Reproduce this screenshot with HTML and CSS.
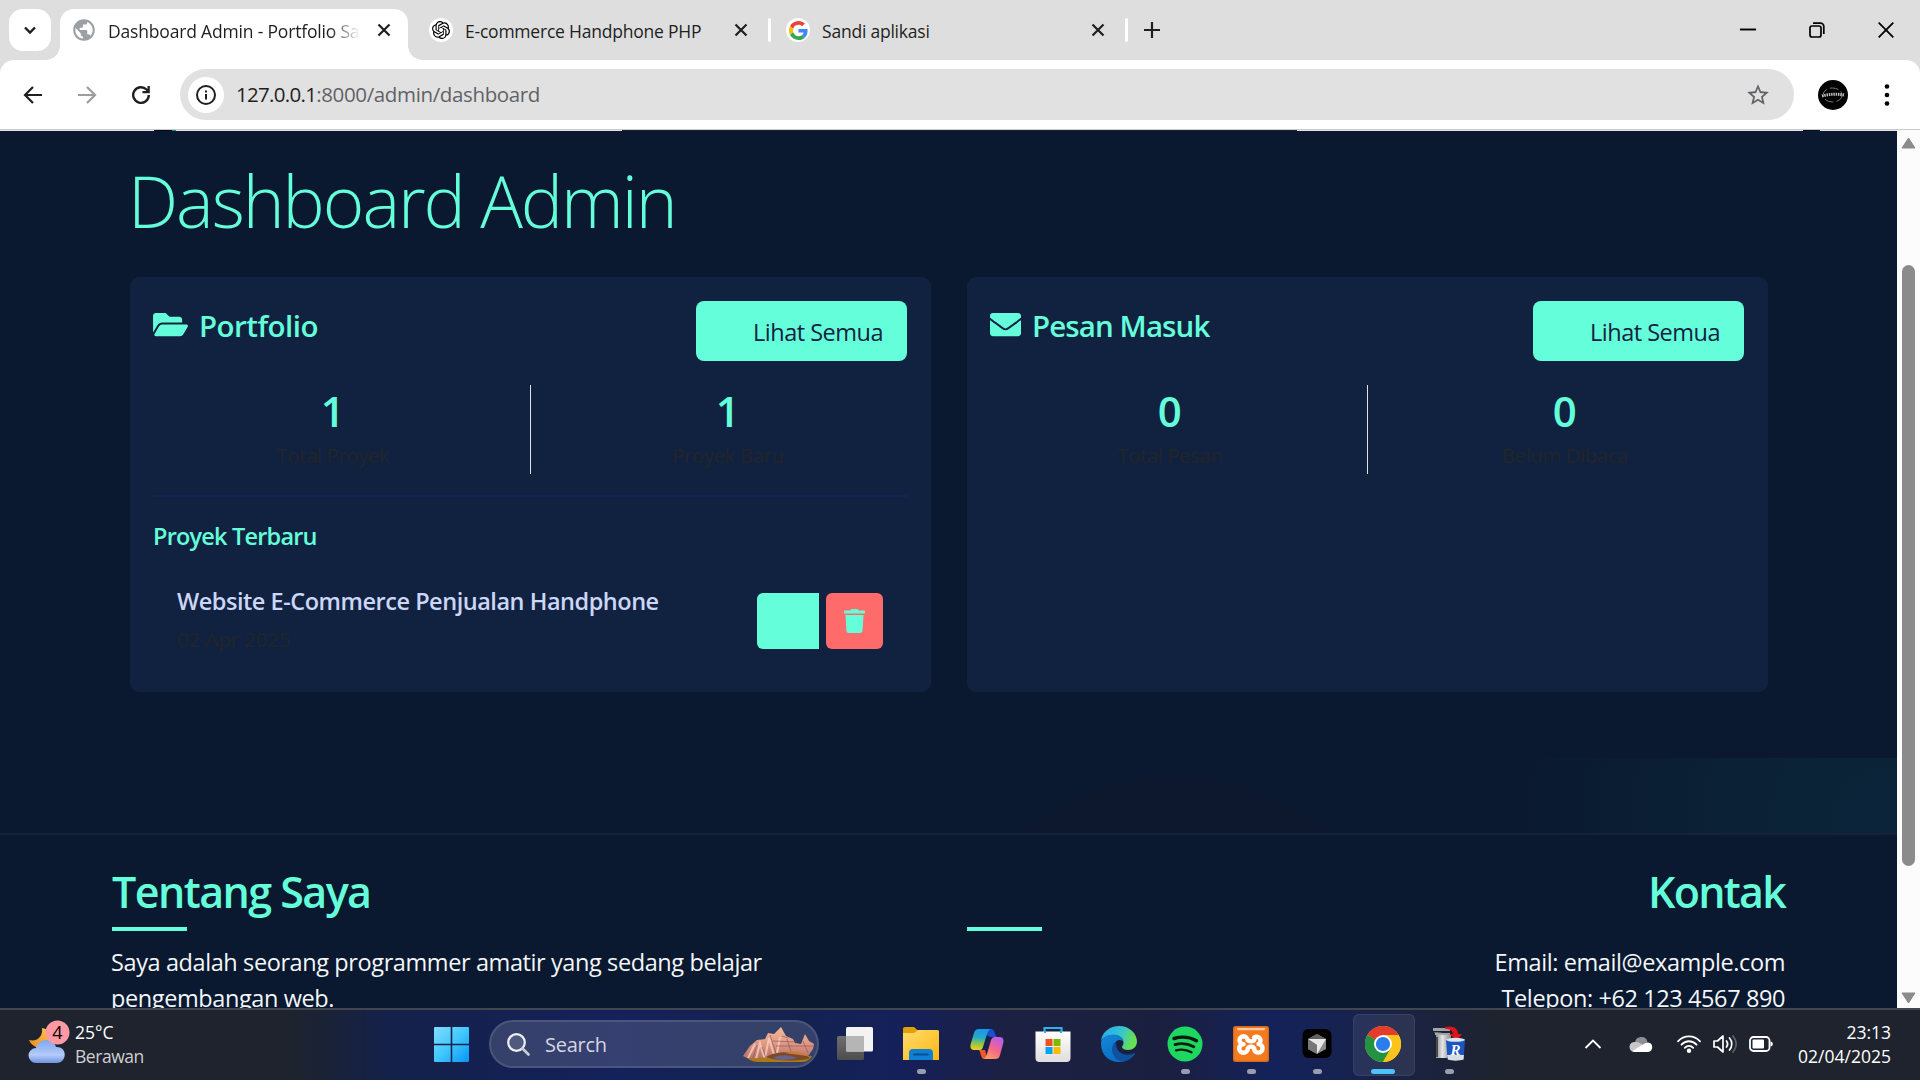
FILE: index.html
```html
<!DOCTYPE html>
<html lang="id">
<head>
<meta charset="utf-8">
<title>Dashboard Admin - Portfolio Saya</title>
<link rel="stylesheet" href="styles.css">
</head>
<body>
<div class="screen">
  <header class="tabstrip">
    <button class="tab-search"><svg width="14" height="14" viewBox="0 0 14 14"><path d="M2 4.5l5 5 5-5" fill="none" stroke="#1f1f1f" stroke-width="2.4"/></svg></button>
    <div class="tab tab-active">
      <svg class="globe" width="26" height="26" viewBox="0 0 24 24"><circle cx="12" cy="12" r="9" fill="#fff"/><path fill="#9aa0a6" d="M12 2C6.48 2 2 6.48 2 12s4.48 10 10 10 10-4.48 10-10S17.52 2 12 2zm-1 17.93c-3.95-.49-7-3.85-7-7.93 0-.62.08-1.21.21-1.79L9 15v1c0 1.1.9 2 2 2v1.93zm6.9-2.54c-.26-.81-1-1.39-1.9-1.39h-1v-3c0-.55-.45-1-1-1H8v-2h2c.55 0 1-.45 1-1V7h2c1.1 0 2-.9 2-2v-.41c2.93 1.19 5 4.06 5 7.41 0 2.08-.8 3.97-2.1 5.39z"/></svg>
      <span class="tab-title fade">Dashboard Admin - Portfolio Sa</span>
      <svg class="x" width="14" height="14" viewBox="0 0 14 14"><path d="M1.5 1.5l11 11M12.5 1.5l-11 11"/></svg>
    </div>
    <div class="tab tab-two">
      <span class="fav"><svg width="18" height="18" viewBox="0 0 24 24"><path d="M22.2819 9.8211a5.9847 5.9847 0 0 0-.5157-4.9108 6.0462 6.0462 0 0 0-6.5098-2.9A6.0651 6.0651 0 0 0 4.9807 4.1818a5.9847 5.9847 0 0 0-3.9977 2.9 6.0462 6.0462 0 0 0 .7427 7.0966 5.98 5.98 0 0 0 .511 4.9107 6.051 6.051 0 0 0 6.5146 2.9001A5.9847 5.9847 0 0 0 13.2599 24a6.0557 6.0557 0 0 0 5.7718-4.2058 5.9894 5.9894 0 0 0 3.9977-2.9001 6.0557 6.0557 0 0 0-.7475-7.0729zm-9.022 12.6081a4.4755 4.4755 0 0 1-2.8764-1.0408l.1419-.0804 4.7783-2.7582a.7948.7948 0 0 0 .3927-.6813v-6.7369l2.02 1.1686a.071.071 0 0 1 .038.052v5.5826a4.504 4.504 0 0 1-4.4945 4.4944zm-9.6607-4.1254a4.4708 4.4708 0 0 1-.5346-3.0137l.142.0852 4.783 2.7582a.7712.7712 0 0 0 .7806 0l5.8428-3.3685v2.3324a.0804.0804 0 0 1-.0332.0615L9.74 19.9502a4.4992 4.4992 0 0 1-6.1408-1.6464zM2.3408 7.8956a4.485 4.485 0 0 1 2.3655-1.9728V11.6a.7664.7664 0 0 0 .3879.6765l5.8144 3.3543-2.0201 1.1685a.0757.0757 0 0 1-.071 0l-4.8303-2.7865A4.504 4.504 0 0 1 2.3408 7.872zm16.5963 3.8558L13.1038 8.364 15.1192 7.2a.0757.0757 0 0 1 .071 0l4.8303 2.7913a4.4944 4.4944 0 0 1-.6765 8.1042v-5.6772a.79.79 0 0 0-.407-.667zm2.0107-3.0231l-.142-.0852-4.7735-2.7818a.7759.7759 0 0 0-.7854 0L9.409 9.2297V6.8974a.0662.0662 0 0 1 .0284-.0615l4.8303-2.7866a4.4992 4.4992 0 0 1 6.6802 4.66zM8.3065 12.863l-2.02-1.1638a.0804.0804 0 0 1-.038-.0567V6.0742a4.4992 4.4992 0 0 1 7.3757-3.4537l-.142.0805L8.704 5.459a.7948.7948 0 0 0-.3927.6813zm1.0976-2.3654l2.602-1.4998 2.6069 1.4998v2.9994l-2.5974 1.4997-2.6067-1.4997Z"/></svg></span>
      <span class="tab-title">E-commerce Handphone PHP</span>
      <svg class="x" width="14" height="14" viewBox="0 0 14 14"><path d="M1.5 1.5l11 11M12.5 1.5l-11 11"/></svg>
    </div>
    <i class="sep"></i>
    <div class="tab tab-three">
      <span class="fav"><svg width="19" height="19" viewBox="0 0 48 48"><path fill="#EA4335" d="M24 9.5c3.54 0 6.71 1.22 9.21 3.6l6.85-6.85C35.9 2.38 30.47 0 24 0 14.62 0 6.51 5.38 2.56 13.22l7.98 6.19C12.43 13.72 17.74 9.5 24 9.5z"/><path fill="#4285F4" d="M46.98 24.55c0-1.57-.15-3.09-.38-4.55H24v9.02h12.94c-.58 2.96-2.26 5.48-4.78 7.18l7.73 6c4.51-4.18 7.09-10.36 7.09-17.65z"/><path fill="#FBBC05" d="M10.53 28.59c-.48-1.45-.76-2.99-.76-4.59s.27-3.14.76-4.59l-7.98-6.19C.92 16.46 0 20.12 0 24c0 3.88.92 7.54 2.56 10.78l7.97-6.19z"/><path fill="#34A853" d="M24 48c6.48 0 11.93-2.13 15.89-5.81l-7.73-6c-2.15 1.45-4.92 2.3-8.16 2.3-6.26 0-11.57-4.22-13.47-9.91l-7.98 6.19C6.51 42.62 14.62 48 24 48z"/></svg></span>
      <span class="tab-title">Sandi aplikasi</span>
      <svg class="x" width="14" height="14" viewBox="0 0 14 14"><path d="M1.5 1.5l11 11M12.5 1.5l-11 11"/></svg>
    </div>
    <i class="sep"></i>
    <svg class="plus" width="16" height="16" viewBox="0 0 16 16"><path d="M8 0v16M0 8h16" stroke="#1f1f1f" stroke-width="2.2"/></svg>
    <div class="win-controls">
      <svg width="16" height="16" viewBox="0 0 16 16"><path d="M0 7.500h16" stroke="#000" stroke-width="1.9"/></svg>
      <svg width="16" height="16" viewBox="0 0 16 16" fill="none" stroke="#000" stroke-width="1.7"><rect x="1" y="4" width="11" height="11" rx="2"/><path d="M4 1.2h7.5a3.3 3.3 0 0 1 3.3 3.3V12"/></svg>
      <svg width="16" height="16" viewBox="0 0 16 16"><path d="M.7.7l14.6 14.6M15.3.7L.7 15.3" stroke="#000" stroke-width="1.8"/></svg>
    </div>
  </header>

  <div class="toolbar-wrap"><div class="toolbar">
    <div class="nav">
      <svg width="20" height="20" viewBox="0 0 20 20" fill="none" stroke="#1f1f1f" stroke-width="2.2"><path d="M19 10H2.5M10 2L2 10l8 8"/></svg>
      <svg width="20" height="20" viewBox="0 0 20 20" fill="none" stroke="#9d9d9d" stroke-width="2.2"><path d="M1 10h16.500M10 2l8 8-8 8"/></svg>
      <svg width="20" height="20" viewBox="0 0 20 20"><path d="M17.800 10a7.800 7.800 0 1 1-2.300-5.500L17.500 6.500" fill="none" stroke="#1f1f1f" stroke-width="2.400"/><path d="M18.800 1v7.300h-7.300V6h5V1z" fill="#1f1f1f"/></svg>
    </div>
    <div class="omnibox">
      <span class="info"><svg width="22" height="22" viewBox="0 0 22 22"><circle cx="11" cy="11" r="9" fill="none" stroke="#1f1f1f" stroke-width="2"/><path d="M10 10h2v5.500h-2zM10 6.500h2v2h-2z" fill="#1f1f1f"/></svg></span>
      <span class="url"><b>127.0.0.1</b>:8000/admin/dashboard</span>
      <svg class="star" width="26" height="26" viewBox="0 0 24 24"><path fill="#5f6368" d="M22 9.240l-7.190-.620L12 2 9.190 8.630 2 9.240l5.460 4.730L5.820 21 12 17.270 18.180 21l-1.630-7.030L22 9.240zM12 15.400l-3.760 2.270 1-4.280-3.320-2.880 4.380-.380L12 6.100l1.710 4.040 4.380.380-3.320 2.880 1 4.280L12 15.400z"/></svg>
    </div>
    <svg class="avatar" width="30" height="30" viewBox="0 0 30 30"><circle cx="15" cy="15" r="15"/><ellipse cx="14.500" cy="15" rx="9.500" ry="7" fill="none" stroke="#777" stroke-width="1" stroke-dasharray="9 3"/><path d="M4 16q11-3 22-1" fill="none" stroke="#bbb" stroke-width="3" stroke-dasharray="1.500 .8"/></svg>
    <svg class="dots" width="6" height="24" viewBox="0 0 6 24"><circle cx="3" cy="3.500" r="2.300"/><circle cx="3" cy="12" r="2.300"/><circle cx="3" cy="20.500" r="2.300"/></svg>
  </div></div>

  <div class="viewport">
    <main class="page">
      <div class="navbar-edge"></div>
      <div class="container">
        <h1>Dashboard Admin</h1>
        <div class="cards">
          <section class="card">
            <div class="card-head">
              <h2><svg width="35" height="31" viewBox="0 0 576 512"><path d="M572.694 292.093L500.270 416.248A63.997 63.997 0 0 1 444.989 448H45.025c-18.523 0-30.064-20.093-20.731-36.093l72.424-124.155A64 64 0 0 1 152 256h399.964c18.523 0 30.064 20.093 20.730 36.093zM152 224h328v-48c0-26.510-21.490-48-48-48H272l-64-64H48C21.490 64 0 85.490 0 112v278.046l69.077-118.418C86.214 242.250 117.989 224 152 224z"/></svg><span>Portfolio</span></h2>
              <a class="btn">Lihat Semua</a>
            </div>
            <div class="stats">
              <div><strong>1</strong><small>Total Proyek</small></div>
              <div><strong>1</strong><small>Proyek Baru</small></div>
            </div>
            <hr>
            <h3>Proyek Terbaru</h3>
            <div class="project">
              <div class="project-info">
                <h4>Website E-Commerce Penjualan Handphone</h4>
                <small>02 Apr 2025</small>
              </div>
              <div class="actions">
                <a class="edit"></a>
                <a class="delete"><svg width="21" height="24" viewBox="0 0 448 512"><path d="M432 32H312l-9.400-18.700A24 24 0 0 0 281.100 0H166.800a23.720 23.720 0 0 0-21.400 13.300L136 32H16A16 16 0 0 0 0 48v32a16 16 0 0 0 16 16h416a16 16 0 0 0 16-16V48a16 16 0 0 0-16-16zM53.200 467a48 48 0 0 0 47.900 45h245.800a48 48 0 0 0 47.900-45L416 128H32z"/></svg></a>
              </div>
            </div>
          </section>
          <section class="card">
            <div class="card-head">
              <h2 class="inbox"><svg width="31" height="31" viewBox="0 0 512 512"><path d="M502.300 190.800c3.900-3.100 9.700-.2 9.700 4.700V400c0 26.500-21.500 48-48 48H48c-26.500 0-48-21.500-48-48V195.600c0-5 5.700-7.800 9.700-4.700 22.400 17.400 52.100 39.500 154.100 113.600 21.100 15.400 56.700 47.800 92.200 47.600 35.700.3 72-32.800 92.300-47.600 102-74.100 131.600-96.300 154-113.700zM256 320c23.200.4 56.600-29.200 73.400-41.400 132.700-96.300 142.800-104.700 173.400-128.700 5.800-4.500 9.200-11.500 9.200-18.900v-19c0-26.500-21.500-48-48-48H48c-26.500 0-48 21.500-48 48v19c0 7.400 3.400 14.300 9.200 18.900 30.600 23.900 40.700 32.400 173.400 128.700 16.800 12.200 50.200 41.800 73.400 41.400z"/></svg><span>Pesan Masuk</span></h2>
              <a class="btn">Lihat Semua</a>
            </div>
            <div class="stats">
              <div><strong>0</strong><small>Total Pesan</small></div>
              <div><strong>0</strong><small>Belum Dibaca</small></div>
            </div>
          </section>
        </div>
      </div>
      <div class="glow"></div>
      <footer>
        <div class="foot-col">
          <h5>Tentang Saya</h5>
          <p>Saya adalah seorang programmer amatir yang sedang belajar<br>pengembangan web.</p>
        </div>
        <div class="foot-col foot-right">
          <h5>Kontak</h5>
          <p>Email: email@example.com<br>Telepon: +62 123 4567 890</p>
        </div>
      </footer>
    </main>
    <div class="scrollbar">
      <svg width="15" height="12" viewBox="0 0 15 12"><path d="M7.500 1L14 11H1z" fill="#8b8b8b" stroke="#8b8b8b" stroke-linejoin="round"/></svg>
      <div class="thumb"></div>
      <svg width="15" height="12" viewBox="0 0 15 12"><path d="M7.500 11L14 1H1z" fill="#8b8b8b" stroke="#8b8b8b" stroke-linejoin="round"/></svg>
    </div>
  </div>

  <div class="taskbar">
    <div class="weather">
      <svg width="44" height="44" viewBox="0 0 44 44">
        <defs><linearGradient id="moon" x1="0" y1="1" x2="1" y2="0"><stop offset="0" stop-color="#f08a1c"/><stop offset="1" stop-color="#fbc84a"/></linearGradient><linearGradient id="cloud" x1="0" y1="0" x2="0" y2="1"><stop offset="0" stop-color="#7fa6ee"/><stop offset=".65" stop-color="#b3ccfa"/><stop offset="1" stop-color="#6f92de"/></linearGradient></defs>
        <path d="M15 8c8 1 13 10 8 17-5 6-17 4-21-5 9 2 14-4 13-12z" fill="url(#moon)"/>
        <path d="M9 43a7.500 7.500 0 1 1 0-15c2-10 17-11 20-1 12-1 11 16 1 16z" fill="url(#cloud)"/>
        <circle cx="30.500" cy="12.500" r="12" fill="#ff99a4"/><text x="30.500" y="19" text-anchor="middle">4</text>
      </svg>
      <div class="weather-text"><span>25°C</span><span class="dim">Berawan</span></div>
    </div>
    <div class="dock">
      <div class="app start"><svg width="35" height="35" viewBox="0 0 35 35"><defs><linearGradient id="win" x1="0" y1="0" x2="1" y2="1"><stop offset="0" stop-color="#84dcfb"/><stop offset=".5" stop-color="#40c8fd"/><stop offset="1" stop-color="#0795f5"/></linearGradient></defs><path fill="url(#win)" d="M1 0h15.700v16.700H0V1a1 1 0 0 1 1-1zM18.300 0H34a1 1 0 0 1 1 1v15.700H18.300zM0 18.300h16.700V35H1a1 1 0 0 1-1-1zM18.300 18.300H35V34a1 1 0 0 1-1 1H18.300z"/></svg></div>
      <div class="search">
        <svg width="23" height="23" viewBox="0 0 23 23"><circle cx="9.500" cy="9.500" r="8.300" fill="#ffffff22" stroke="#eef0f5" stroke-width="2.200"/><path d="M15.500 15.500l6 6" stroke="#c9cdd8" stroke-width="2.600" stroke-linecap="round"/></svg>
        <span>Search</span>
        <svg class="mesa" width="72" height="35" viewBox="0 0 72 35">
          <defs><linearGradient id="rock" x1="0" y1="0" x2="0" y2="1"><stop offset="0" stop-color="#f7b999"/><stop offset=".5" stop-color="#e09a84"/><stop offset="1" stop-color="#b87068"/></linearGradient></defs>
          <path fill="url(#rock)" d="M0 29l7-10 7-6 8-1 3-6 6 1 7-7 5 9 7 3 2 4 6 1 4-10 4 7 5 3-1 5-7 10H6z"/>
          <path d="M5 31l7-14M13 32l4-16 4 14M22 31l4-20 5 17M34 26l3-16" stroke="#f5d0bd" stroke-width="2" fill="none" opacity=".8"/>
          <path d="M10 31l4-13M19 20l4 11M27 8l6 18M44 12l4 13M60 14l5 12M30 14l24 1M33 19l37 0M39 9l6 2" stroke="#8a4d5a" stroke-width="1" fill="none" opacity=".6"/>
          <path d="M4 31c22 1 42-4 65-2-2 4-6 6-11 6H17c-6 0-9-1-13-4z" fill="#a97818"/>
          <path d="M23 30c10-7 35-6 44 1-5 3-34 4-44-1z" fill="#7b4a28"/><path d="M30 31c8-4 16-3 24 0-6 2-18 3-24 0z" fill="#68618a"/><path d="M42 26c9-3 17-1 22 3z" fill="#c97b3d"/>
        </svg>
      </div>
      <div class="app"><svg width="36" height="36" viewBox="0 0 36 36"><defs><linearGradient id="tv" x1="0" y1="0" x2="0" y2="1"><stop offset="0" stop-color="#6f6f70"/><stop offset="1" stop-color="#4d4d4e"/></linearGradient></defs><rect y="10" width="27" height="24" rx="1.500" fill="url(#tv)"/><rect x="9" y="1" width="27" height="24.500" rx="1.500" fill="#f3f3f4"/><path d="M9 10h18v15.500H10.500A1.500 1.500 0 0 1 9 24z" fill="#b5b5b6"/></svg></div>
      <div class="app open"><svg width="36" height="36" viewBox="0 0 36 36"><defs><linearGradient id="fold" x1="0" y1="0" x2="1" y2="1"><stop offset="0" stop-color="#ffdc6b"/><stop offset="1" stop-color="#fcb714"/></linearGradient></defs><path d="M0 3a2 2 0 0 1 2-2h9l4 3.500V10H0z" fill="#dfa00b"/><path d="M0 7h11l4-3h19.500A1.500 1.500 0 0 1 36 5.500V34H0z" fill="url(#fold)"/><path d="M6 34v-7a4 4 0 0 1 4-4h16a4 4 0 0 1 4 4v7z" fill="#0f7fd2"/><path d="M11 28.500h14" stroke="#0a4f96" stroke-width="1.800" stroke-linecap="round"/></svg></div>
      <div class="app"><svg width="36" height="36" viewBox="0 0 36 36"><defs><linearGradient id="cp1" x1=".4" y1="0" x2=".3" y2="1"><stop offset="0" stop-color="#1997ee"/><stop offset=".4" stop-color="#25aac5"/><stop offset=".7" stop-color="#8cc84b"/><stop offset="1" stop-color="#f2cd1c"/></linearGradient><linearGradient id="cp2" x1=".8" y1="0" x2=".2" y2="1"><stop offset="0" stop-color="#b45cf1"/><stop offset=".5" stop-color="#f2668d"/><stop offset="1" stop-color="#ffa25c"/></linearGradient></defs><path d="M17 3h5c4 0 3.500 6 6 8h-6c-2 0-3-2-5-2z" fill="#1b4fd0"/><path d="M10 24h6l2 7-3 2c-3 0-3-6-5-9z" fill="#f0582c"/><path d="M10 3h13c-3 0-4 2-5 5l-4 13c-1 3-2 3-4 3H5c-4 0-4-4-3-7L5 7c1-3 2-4 5-4z" fill="url(#cp1)"/><path d="M26 33H13c3 0 4-2 5-5l4-14c1-2 2-3 4-3h5c4 0 4 4 3 7l-3 11c-1 3-2 4-5 4z" fill="url(#cp2)"/></svg></div>
      <div class="app"><svg width="36" height="36" viewBox="0 0 36 36"><defs><linearGradient id="bag" x1="0" y1="0" x2="0" y2="1"><stop offset="0" stop-color="#fff"/><stop offset="1" stop-color="#dedede"/></linearGradient></defs><path d="M9.500 8V2h17v6" fill="none" stroke="#29b3ea" stroke-width="2.200"/><path d="M.5 5.500h35V32a4 4 0 0 1-4 4h-27a4 4 0 0 1-4-4z" fill="url(#bag)"/><path d="M9 5h2v2H9zM25 5h2v2h-2z" fill="#29b3ea"/><path d="M10.500 13h7v7h-7z" fill="#f25022"/><path d="M18.500 13h7v7h-7z" fill="#7fba00"/><path d="M10.500 21h7v7h-7z" fill="#00a4ef"/><path d="M18.500 21h7v7h-7z" fill="#ffb900"/></svg></div>
      <div class="app"><svg width="36" height="36" viewBox="0 0 36 36"><defs><linearGradient id="e1" x1="0" y1="0" x2="1" y2=".3"><stop offset="0" stop-color="#2aa6e8"/><stop offset=".55" stop-color="#32c3d6"/><stop offset="1" stop-color="#67e052"/></linearGradient><linearGradient id="e2" x1="0" y1="0" x2=".5" y2="1"><stop offset="0" stop-color="#1488d8"/><stop offset="1" stop-color="#0a6fc4"/></linearGradient></defs><path d="M0 15C1 6 9 0 18 0c11 0 18 8 18 15.500 0 5-4 8.500-9 8.500-4 0-6-1.500-6-3 0-1 1.500-1.500 1.500-4.500C22.500 12 18 9 13 9 6 9 1 12 0 15z" fill="url(#e1)"/><path d="M0 17c0-5 6-8.500 13-8.500 5 0 9.500 3 9.500 8 0-2.500-7-5-9 2C11 27 17 36 24 34.900 15 38.500 0 34 0 17z" fill="url(#e2)"/><path d="M13.800 16.500C8 22 12 33 20.500 35.500c6 .2 11-3.500 13.500-7.500.4-.8-.4-1.200-1-.8-8 4-18.500-.7-17.800-9.200z" fill="#11509e"/></svg></div>
      <div class="app open"><svg width="36" height="36" viewBox="0 0 36 36"><circle cx="18" cy="18" r="17.500" fill="#1ed760"/><g fill="none" stroke="#101812" stroke-linecap="round"><path d="M7 12.500c7.500-2.200 16-1.500 22.500 2.200" stroke-width="3.400"/><path d="M8 18.600c6.500-1.800 13-1 18.800 2.200" stroke-width="2.800"/><path d="M9 24.300c5.500-1.300 10.500-.8 15.500 2" stroke-width="2.300"/></g></svg></div>
      <div class="app open"><svg width="36" height="36" viewBox="0 0 36 36"><rect width="36" height="36" rx="2.500" fill="#d66a1c"/><rect x="1.200" y="1.200" width="33.600" height="33.600" rx="2" fill="#f47a20"/><path d="M4 2h28v1.200a2 2 0 0 1-2 1H6a2 2 0 0 1-2-1z" fill="#ffc79c"/><g fill="none" stroke="#fff" stroke-width="4.400" stroke-linecap="round"><path d="M14.500 14a4 4 0 1 0-4 4.200M10.500 18.200a4.300 4.300 0 1 0 4.300 4.600M21 11.500a4 4 0 1 1 5 6.300M25.500 18a4.300 4.300 0 1 1-4.500 5M14.500 13.500c1 2.500 6 2.500 7 0M14.500 24c0-4.500 7-4.500 7 0"/></g></svg></div>
      <div class="app open"><svg width="36" height="36" viewBox="0 0 36 36"><rect x="3.500" y="3" width="29" height="29" rx="6" fill="#000"/><path d="M18 8l9 5v10l-9 5-9-5V13z" fill="#8b8b8b"/><path d="M9 13l9-5 9 5z" fill="#606060"/><path d="M9 13h18l-9 15v-9z" fill="#e9e9e9"/><path d="M9 13v10l9 5v-9z" fill="#777"/></svg></div>
      <div class="app current"><svg width="36" height="36" viewBox="0 0 36 36"><circle cx="18" cy="18" r="18" fill="#fbc116"/><path d="M18 18L2.400 9A18 18 0 0 1 33.600 9z" fill="#e33b2e"/><path d="M2.400 9A18 18 0 0 0 18 36l7.800-13.500L18 18z" fill="#229342"/><path d="M18 9h15.600A18 18 0 0 1 18 36l7.800-13.500z" fill="#fcc41a"/><circle cx="18" cy="18" r="9" fill="#fff"/><circle cx="18" cy="18" r="7.100" fill="#2b7ded"/></svg></div>
      <div class="app open"><svg width="36" height="36" viewBox="0 0 36 36"><defs><linearGradient id="rv" x1="0" y1="0" x2="1" y2="0"><stop offset="0" stop-color="#777"/><stop offset=".5" stop-color="#e4e4e4"/><stop offset="1" stop-color="#888"/></linearGradient></defs><path d="M3 6l17 2v24H5V9z" fill="url(#rv)"/><path d="M2 2h17v3H2zM4 7h15v2H4z" fill="#a4a4a4"/><path d="M6 11v20" stroke="#4a4a4a" stroke-width="2"/><path d="M14 1c9-2 13 2 13 7h4l-5 6-8-6h4c0-3-3-5-8-5z" fill="#e0131b"/><path d="M15 14h19l-1.500 20h-16z" fill="#1b55bd"/><path d="M16 29h17l-.5 4.500c-4 1.500-12 1.500-15.500 0z" fill="#d9dde4"/><ellipse cx="24.500" cy="13.800" rx="9.500" ry="2" fill="#dfe3ea"/><text class="revo" x="24.500" y="29" text-anchor="middle">R</text></svg></div>
    </div>
    <div class="tray">
      <svg width="18" height="18" viewBox="0 0 18 18"><path d="M1.500 13L9 5.500l7.500 7.500" fill="none" stroke="#fff" stroke-width="1.800"/></svg>
      <svg class="od" width="24" height="18" viewBox="0 0 24 18"><path d="M6 7a6.500 6.500 0 0 1 12.500-.5l-6 4z" fill="#8f9093"/><path d="M5 17a5 5 0 0 1 1-10c3-.5 5 1 9 4L7 17z" fill="#c6c7c9"/><path d="M3.500 16l11-7c1.500-1.200 3-1.800 4.700-1.500A4.800 4.800 0 0 1 19 17H5z" fill="#fff"/></svg>
      <svg class="wifi" width="24" height="18" viewBox="0 0 24 18" fill="none" stroke="#fff" stroke-width="1.800" stroke-linecap="round"><path d="M1 6.300C7-.3 17-.3 23 6.300M4.500 9.700c4.300-4.600 10.700-4.600 15 0M7.800 12.800c2.400-2.600 6-2.600 8.400 0"/><circle cx="12" cy="15.700" r="1.300" fill="#fff"/></svg>
      <svg class="vol" width="24" height="20" viewBox="0 0 24 20" fill="none" stroke="#fff" stroke-width="1.700" stroke-linecap="round" stroke-linejoin="round"><path d="M1 7h3.500L10 2v16l-5.500-5H1z"/><path d="M13.500 7a5 5 0 0 1 0 6M16.500 4a9 9 0 0 1 0 12"/><path d="M20 2c4 5 4 11 0 16" stroke="#5b5f67"/></svg>
      <svg class="bat" width="24" height="18" viewBox="0 0 24 18"><rect x="1" y="2" width="19.500" height="14" rx="3.500" fill="none" stroke="#fff" stroke-width="1.800"/><rect x="3.500" y="4.500" width="11.500" height="9" rx="1" fill="#fff"/><path d="M21.500 6.500c3 0 3 5 0 5z" fill="#fff"/></svg>
      <div class="clock"><span>23:13</span><span>02/04/2025</span></div>
    </div>
  </div>
</div>
</body>
</html>
```
FILE: styles.css
```css
* { box-sizing: border-box; }
body, h1, h2, h3, h4, h5, p { margin: 0; }
body {
  width: 1920px; height: 1080px; overflow: hidden;
  font-family: "Open Sans", "Noto Sans", sans-serif;
  background: #0a192f;
}
svg { display: block; flex: none; }
.screen { display: flex; flex-direction: column; height: 1080px; }

/* tab strip */
.tabstrip { height: 60px; background: #dedede; display: flex; align-items: center; padding-left: 9px; position: relative; }
.tab-search { width: 42px; height: 42px; border: 0; border-radius: 14px; background: #fff; display: grid; place-items: center; padding: 0; }
.tab { display: flex; align-items: center; height: 51px; font-size: 17.500px; letter-spacing: -.22px; color: #1f1f1f; }
.tab-active { width: 348px; margin-left: 9px; background: #fff; border-radius: 14px 14px 0 0; align-self: flex-end; padding: 0 17px 9px 11px; position: relative; letter-spacing: -.18px; }
.tab-active::before, .tab-active::after { content: ""; position: absolute; bottom: 0; width: 14px; height: 14px; }
.tab-active::before { left: -14px; background: radial-gradient(circle at 0 0, transparent 13.500px, #fff 14px); }
.tab-active::after { right: -14px; background: radial-gradient(circle at 100% 0, transparent 13.500px, #fff 14px); }
.tab-title { flex: 1; white-space: nowrap; overflow: hidden; line-height: 26px; padding-top: 2px; }
.tab-active .tab-title { margin-left: 11px; margin-right: 17px; }
.fade { -webkit-mask-image: linear-gradient(90deg, #000 88%, transparent 100%); mask-image: linear-gradient(90deg, #000 88%, transparent 100%); }
.x { stroke: #1f1f1f; stroke-width: 2.200; }
.fav { width: 24px; height: 24px; border-radius: 50%; background: #fff; display: grid; place-items: center; margin-right: 12px; }
.tab-two { width: 360px; padding: 0 20px 0 21px; }
.tab-three { width: 354px; padding: 0 20px 0 15px; }
.sep { width: 3px; height: 24px; border-radius: 2px; background: #fff; }
.plus { margin-left: 16px; }
.win-controls { margin-left: auto; display: flex; gap: 53px; padding-right: 26px; }

/* toolbar */
.toolbar-wrap { background: #dedede; }
.toolbar { height: 69px; background: #fff; border-radius: 14px 14px 0 0; display: flex; align-items: center; }
.nav { width: 180px; display: flex; gap: 34px; padding-left: 23px; }
.omnibox { width: 1614px; height: 51px; border-radius: 26px; background: #e1e1e1; display: flex; align-items: center; padding: 0 23px 0 8px; }
.info { width: 36px; height: 36px; border-radius: 50%; background: #fff; display: grid; place-items: center; }
.url { flex: 1; margin-left: 12px; padding-bottom: 2px; font-size: 20.500px; letter-spacing: -.36px; color: #5f6368; }
.url b { font-weight: 400; letter-spacing: -.7px; color: #1f1f1f; }
.avatar { margin-left: 24px; }
.dots { margin-left: 36px; }

/* page */
.viewport { flex: 1; min-height: 0; display: flex; border-top: 1px solid #c9c9c9; }
.page { flex: 1; overflow: hidden; background: #0a192f; }
.navbar-edge { height: 2px; background: linear-gradient(90deg, #e6e6e6 154px, #050b12 154px 172px, #0b8f9c 172px 176px, #e6e6e6 176px 622px, #1b232b 622px 1297px, #e6e6e6 1297px 1803px, #0b1016 1803px 1820px, #e6e6e6 1820px); border-bottom: 1px solid #0a192f; }
.container { width: 1638px; margin-left: 130px; padding-top: 21px; }
h1 { font-size: 71px; font-weight: 300; letter-spacing: -2.040px; color: #64ffda; line-height: 96px; height: 124px; margin-left: -2px; }
.cards { display: grid; grid-template-columns: 801px 801px; gap: 36px; height: 415px; }
.card { background: #112240; border-radius: 9px; padding: 24px; }
.card-head { display: flex; justify-content: space-between; height: 60px; }
h2 { display: flex; gap: 11px; font-size: 29.500px; font-weight: 600; letter-spacing: -.520px; color: #64ffda; fill: #64ffda; line-height: 36px; padding-top: 7px; margin-left: -1px; }
.inbox { letter-spacing: -.900px; }
h2 svg { margin-top: 1px; }
.btn { width: 211px; height: 60px; border-radius: 8px; background: #64ffda; color: #112240; font-size: 23.500px; letter-spacing: -.500px; line-height: 62px; text-align: right; padding-right: 24px; }
.stats { display: grid; grid-template-columns: 1fr 1fr; margin: 24px -18px 0; text-align: center; height: 87px; }
.stats > div { display: flex; flex-direction: column; align-items: center; }
.stats > div:first-child { border-right: 1px solid #dee2e6; }
.stats strong { font-size: 42px; font-weight: 600; line-height: 51px; color: #64ffda; }
small { font-size: 20.500px; letter-spacing: -.470px; color: #212529; line-height: 38px; }
hr { border: 0; height: 2px; background: #13265a; opacity: .8; margin: 23px 0 0; }
h3 { font-size: 23.500px; font-weight: 600; letter-spacing: -.800px; color: #64ffda; line-height: 28px; margin: 25px 0 0 -1px; }
.project { display: flex; justify-content: space-between; padding: 30px 24px 0; }
.project-info { padding-top: 6px; margin-left: -1px; }
h4 { font-size: 23.500px; font-weight: 600; letter-spacing: -.470px; color: #ccd6f6; line-height: 30px; }
.project small { display: block; margin-top: 4px; letter-spacing: -.150px; }
.actions { display: flex; gap: 7px; padding-top: 13px; }
.edit { width: 62px; height: 56px; border-radius: 6px 0 0 6px; background: #64ffda; }
.delete { width: 57px; height: 56px; border-radius: 6px; background: #ff6b6b; fill: #64ffda; display: grid; place-items: center; }
.glow { margin-top: 66px; height: 75px; background: radial-gradient(circle 239px at 1174px 257px, #0d182f 99.500%, transparent 100%), radial-gradient(ellipse 370px 380px at 1890px 70px, #0b2439 0, #0b2236 40%, #0a192f 100%); }
footer { border-top: 2px solid #14223a; display: grid; grid-template-columns: 855px 818px; padding: 34px 0 0 112px; }
h5 { font-size: 43px; font-weight: 600; letter-spacing: -1.560px; color: #64ffda; line-height: 45px; height: 62px; position: relative; }
.foot-right h5 { letter-spacing: -1.770px; }
h5::after { content: ""; position: absolute; left: 0; bottom: 0; width: 75px; height: 4px; background: #64ffda; }
.foot-col p { font-size: 23.500px; letter-spacing: -.400px; line-height: 36px; color: #f3f6fa; padding-top: 13px; margin-left: -1px; white-space: nowrap; }
.foot-right { text-align: right; }
.scrollbar { width: 23px; background: #fcfcfc; display: flex; flex-direction: column; align-items: center; padding: 7px 0 4px; }
.thumb { width: 13px; height: 601px; margin: 116px 0 auto; border-radius: 7px; background: #8b8b8b; }

/* taskbar */
.taskbar { height: 72px; border-top: 2px solid #42464f; display: flex; align-items: center; padding-bottom: 2px; color: #fff; font-size: 17.500px; position: relative; background: linear-gradient(90deg, #1e232d 0, #1e232d 290px, #14214a 390px, #15215a 620px, #13224f 780px, #15205a 900px, #1c2042 1010px, #1b1f3f 1160px, #14225a 1270px, #17224d 1360px, #1e232d 1500px); }
.weather { width: 422px; display: flex; padding-left: 27px; }
.weather > svg { margin-top: -1px; }
.weather text { font-size: 18px; }
.weather-text { display: flex; flex-direction: column; line-height: 24px; margin: -1px 0 0 4px; }
.dim { color: #cfd0d2; letter-spacing: -.450px; }
.dock { display: flex; align-items: center; }
.app { width: 66px; height: 66px; display: grid; place-items: center; position: relative; }
.start { width: 67px; margin-left: -4px; }
.app.open::after, .app.current::after { content: ""; position: absolute; bottom: 3px; left: 29px; width: 9px; height: 5px; border-radius: 3px; background: #9a9caf; }
.app.current::after { left: 21px; width: 24px; background: #4cc2ff; }
.app.current::before { content: ""; position: absolute; left: 3px; top: 3px; width: 60px; height: 60px; border-radius: 6px; background: #ffffff14; border: 1px solid #ffffff12; }
.app svg { position: relative; }
.revo { font: italic bold 15px "Liberation Serif", serif; fill: #fff; }
.search { width: 330px; height: 48px; border-radius: 24px; background: #ffffff24; border: 2px solid #ffffff1c; margin: 0 3px 0 4px; display: flex; align-items: center; padding: 0 2px 0 16px; font-size: 20px; letter-spacing: -.250px; color: #d4d7e2; }
.search span { margin-left: 15px; }
.mesa { margin-left: auto; }
.tray { margin-left: auto; display: flex; align-items: center; padding-right: 29px; }
.od { margin-left: 27px; }
.wifi { margin-left: 24px; }
.vol, .bat { margin-left: 12px; }
.clock { margin: -1px 0 0 24px; line-height: 24px; display: flex; flex-direction: column; align-items: flex-end; width: 94px; }
```
